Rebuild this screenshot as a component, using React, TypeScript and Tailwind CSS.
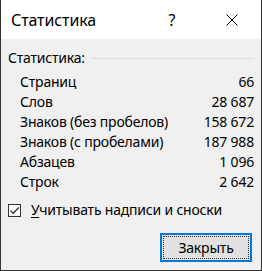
import React from "react";

const rows: [string, string][] = [
  ["Страниц", "66"],
  ["Слов", "28 687"],
  ["Знаков (без пробелов)", "158 672"],
  ["Знаков (с пробелами)", "187 988"],
  ["Абзацев", "1 096"],
  ["Строк", "2 642"],
];

export default function App() {
  return (
    <div
      className="w-[262px] h-[271px] flex flex-col border-l border-r border-b border-[#333333] text-black"
      style={{ fontFamily: '"Noto Sans", "Open Sans", sans-serif' }}
    >
      <div className="h-[39px] bg-white flex items-center pl-[10px] shrink-0">
        <span className="text-[16px] leading-none flex-1 tracking-[-0.1px]">Статистика</span>
        <span className="text-[16px] leading-none w-[12px] text-center mr-[48px]">?</span>
        <svg width="12" height="12" viewBox="0 0 12 12" className="mr-[23px]">
          <path d="M0.5 0.5 L11.5 11.5 M11.5 0.5 L0.5 11.5" stroke="#000" strokeWidth="1" fill="none" />
        </svg>
      </div>
      <div className="flex-1 bg-[#f0f0f0] flex flex-col pl-[7px] pr-[7px] text-[14px] tracking-[-0.2px]">
        <div className="h-[20px] mt-[9px] flex items-center">
          <span className="leading-none">Статистика:</span>
          <div className="flex-1 h-px bg-[#dcdcdc] ml-[6px]" />
        </div>
        <div className="mt-[4px] flex flex-col pl-[12px]">
          {rows.map(([k, v]) => (
            <div key={k} className="h-[20px] flex items-center justify-between">
              <span className="leading-none">{k}</span>
              <span className="leading-none">{v}</span>
            </div>
          ))}
        </div>
        <div className="h-[20px] mt-[8px] flex items-center">
          <div className="w-[13px] h-[13px] border border-[#333333] bg-white flex items-center justify-center">
            <svg width="11" height="11" viewBox="0 0 11 11">
              <path d="M1.5 5.5 L4.2 8.3 L9.8 2.5" stroke="#333" strokeWidth="1.3" fill="none" />
            </svg>
          </div>
          <span className="leading-none ml-[10px]">
            <span className="underline underline-offset-2">У</span>читывать надписи и сноски
          </span>
        </div>
        <div className="flex justify-end mt-[13px] pr-[2px]">
          <div className="w-[92px] h-[29px] border-2 border-[#0078d7] bg-[#e1e1e1] p-[1px]">
            <div className="w-full h-full border border-dotted border-[#333] flex items-center justify-center">
              <span className="leading-none">Закрыть</span>
            </div>
          </div>
        </div>
      </div>
    </div>
  );
}
